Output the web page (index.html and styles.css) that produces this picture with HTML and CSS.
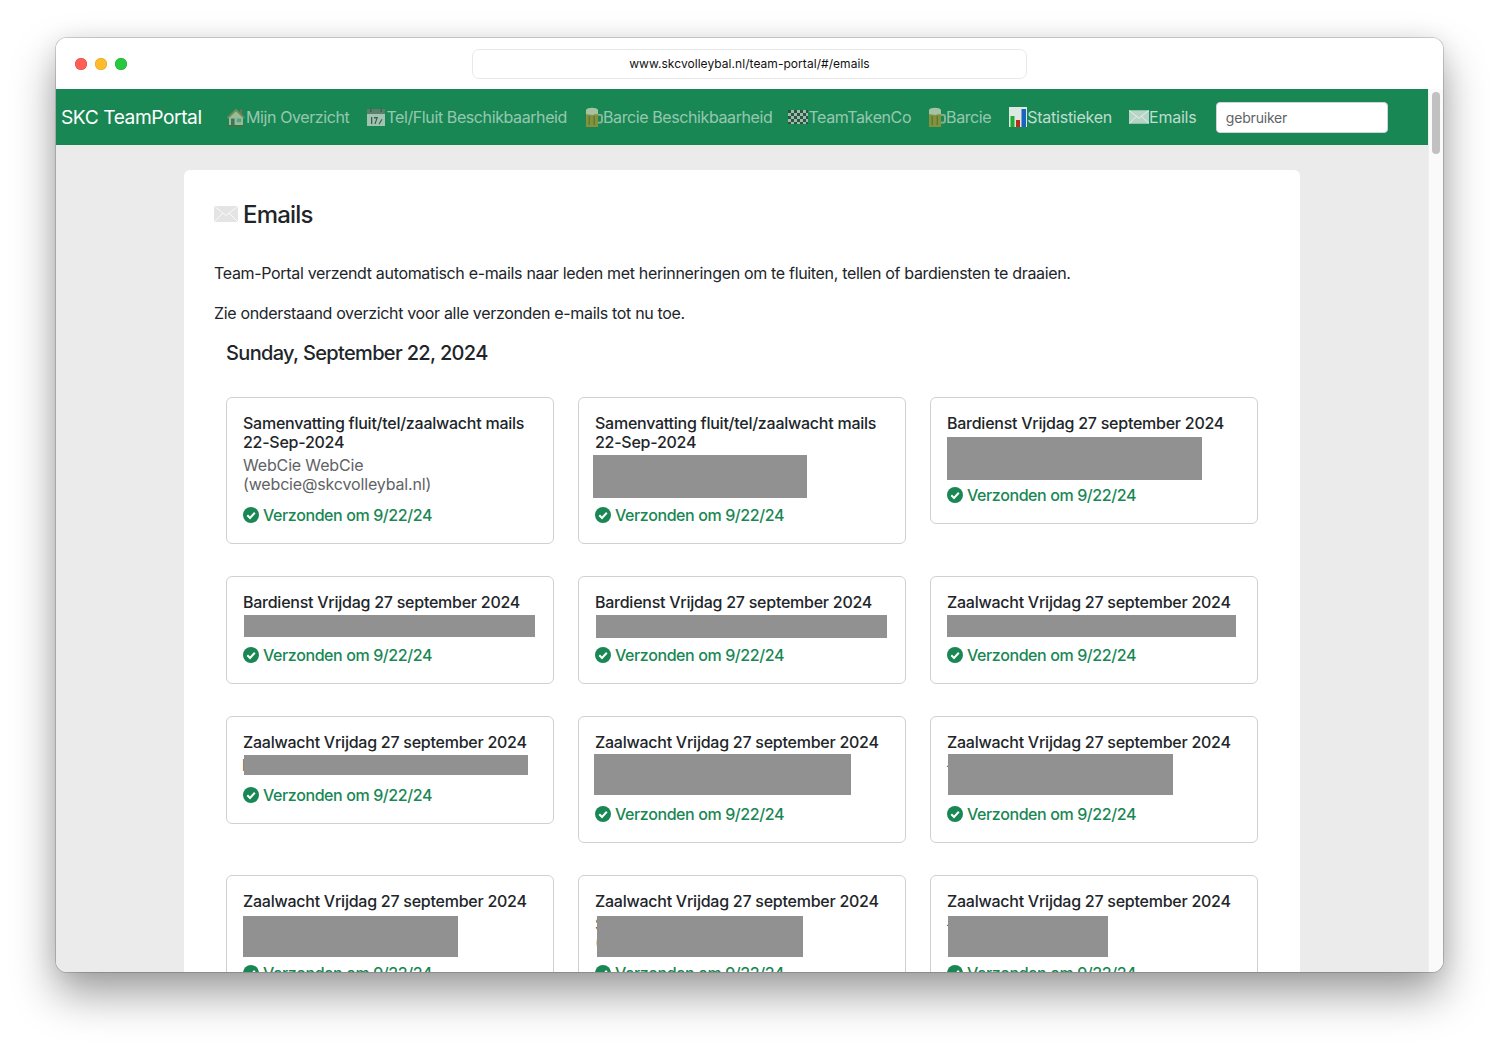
FILE: index.html
```html
<!DOCTYPE html>
<html lang="nl">
<head>
<meta charset="utf-8">
<title>SKC TeamPortal</title>
<link rel="stylesheet" href="styles.css">
</head>
<body>
<svg class="defs" width="0" height="0" aria-hidden="true">
  <defs>
    <symbol id="i-house" viewBox="0 0 20 20">
      <path d="M3 9.500 10 3.500l7 6V18H3z" fill="#c3cfa6"/>
      <path d="M.8 10.500 10 1.500l9.200 9-1.400 1.200L10 4.200 2.200 11.700z" fill="#8d8a66"/>
      <path d="M14 2.500h2.200v5.200L14 5.800z" fill="#8a6f55"/>
      <path d="M5 11.500h3.600V18H5z" fill="#4f6f66"/>
      <path d="M10.800 11.500h4.400v3.800h-4.400z" fill="#6fa6ae"/>
      <path d="M1 18h18v1.600H1z" fill="#4c6b3c"/>
    </symbol>
    <symbol id="i-cal" viewBox="0 0 20 20">
      <path d="M1 2h18v17H1z" fill="#cfd8d0"/>
      <path d="M1 2h18v5H1z" fill="#6d7f74"/>
      <path d="M4 1h1.500v4H4zM14.500 1H16v4h-1.500z" fill="#4d5a52"/>
      <path d="M5 10h1.300v7H5zM8 10h4l-2.400 7H8.300l2-5.600H8zM12.500 17l3-5 1 .6-3 5z" fill="#44524a"/>
    </symbol>
    <symbol id="i-beer" viewBox="0 0 18 20">
      <path d="M1 5h12v15H1z" fill="#a8963a"/>
      <path d="M1 3c1-3 11-3 12 0v4c-2 1-3-.5-4 .5-1 1-2 0-3 .2C4 8 3 7 1 7.500z" fill="#d4d8bd"/>
      <path d="M13 7h2.500c1.700 0 2.500 1.300 2.500 3v3.500c0 1.800-.8 3-2.500 3H13v-1.800h2c.8 0 1-.7 1-1.400v-3.100c0-.8-.2-1.400-1-1.400h-2z" fill="#b3bfa2"/>
      <path d="M3.500 9H5v9H3.500zM8.500 9H10v9H8.500z" fill="#77752d"/>
    </symbol>
    <symbol id="i-flag" viewBox="0 0 20 14">
      <path d="M0 0h20v14H0z" fill="#c3d1c8"/>
      <path d="M0 0h3v3H0zM6 0h3v3H6zM12 0h3v3h-3zM18 0h2v3h-2zM3 3h3v3H3zM9 3h3v3H9zM15 3h3v3h-3zM0 6h3v3H0zM6 6h3v3H6zM12 6h3v3h-3zM18 6h2v3h-2zM3 9h3v3H3zM9 9h3v3H9zM15 9h3v3h-3zM0 12h3v2H0zM6 12h3v2H6zM12 12h3v2h-3zM18 12h2v2h-2z" fill="#33433a"/>
    </symbol>
    <symbol id="i-chart" viewBox="0 0 18 20">
      <path d="M0 0h18v20H0z" fill="#e7eee9"/>
      <path d="M1.500 9h4v11h-4z" fill="#1fae33"/>
      <path d="M7 13h4v7H7z" fill="#c5281c"/>
      <path d="M12.500 2H17v18h-4.500z" fill="#1c62c4"/>
    </symbol>
    <symbol id="i-mail" viewBox="0 0 24 16">
      <path d="M0 0h24v16H0z" fill="currentColor"/>
      <path d="M0 0l12 9.500L24 0M0 16l9-9M24 16l-9-9" fill="none" stroke="#fff" stroke-opacity=".85" stroke-width=".9"/>
    </symbol>
    <symbol id="i-check" viewBox="0 0 16 16">
      <circle cx="8" cy="8" r="8" fill="currentColor"/>
      <path d="M4.300 8.300 7 11l4.800-5.200" fill="none" stroke="#fff" stroke-width="2"/>
    </symbol>
  </defs>
</svg>

<div class="window">
  <header class="titlebar">
    <div class="lights">
      <span class="light light-red"></span>
      <span class="light light-amber"></span>
      <span class="light light-green"></span>
    </div>
    <div class="address">www.skcvolleybal.nl/team-portal/#/emails</div>
  </header>

  <div class="viewport">
    <div class="page">
      <nav class="navbar">
        <a class="brand">SKC TeamPortal</a>
        <ul class="navlist">
          <li class="navitem item-1"><svg class="ico ico-house"><use href="#i-house"/></svg>Mijn Overzicht</li>
          <li class="navitem item-2"><svg class="ico ico-cal"><use href="#i-cal"/></svg>Tel/Fluit Beschikbaarheid</li>
          <li class="navitem item-3"><svg class="ico ico-beer"><use href="#i-beer"/></svg>Barcie Beschikbaarheid</li>
          <li class="navitem item-4"><svg class="ico ico-flag"><use href="#i-flag"/></svg>TeamTakenCo</li>
          <li class="navitem item-5"><svg class="ico ico-beer"><use href="#i-beer"/></svg>Barcie</li>
          <li class="navitem item-6 bright"><svg class="ico ico-chart"><use href="#i-chart"/></svg>Statistieken</li>
          <li class="navitem item-7 bright"><svg class="ico ico-mail nav-mail"><use href="#i-mail"/></svg>Emails</li>
        </ul>
        <input class="userbox" type="text" placeholder="gebruiker">
      </nav>

      <main class="sheet">
        <h1 class="title"><svg class="title-mail"><use href="#i-mail"/></svg>Emails</h1>
        <p class="intro intro-first">Team-Portal verzendt automatisch e-mails naar leden met herinneringen om te fluiten, tellen of bardiensten te draaien.</p>
        <p class="intro">Zie onderstaand overzicht voor alle verzonden e-mails tot nu toe.</p>
        <h2 class="date">Sunday, September 22, 2024</h2>

        <section class="grid">
          <article class="mail long">
            <h3 class="subject">Samenvatting fluit/tel/zaalwacht mails 22-Sep-2024</h3>
            <div class="who">WebCie WebCie<br>(webcie@skcvolleybal.nl)</div>
            <div class="sent"><svg class="check"><use href="#i-check"/></svg>Verzonden om 9/22/24</div>
          </article>
          <article class="mail long">
            <h3 class="subject">Samenvatting fluit/tel/zaalwacht mails 22-Sep-2024</h3>
            <div class="who two"><span class="bar b1"></span></div>
            <div class="sent"><svg class="check"><use href="#i-check"/></svg>Verzonden om 9/22/24</div>
          </article>
          <article class="mail">
            <h3 class="subject">Bardienst Vrijdag 27 september 2024</h3>
            <div class="who two"><span class="bar b2"></span></div>
            <div class="sent"><svg class="check"><use href="#i-check"/></svg>Verzonden om 9/22/24</div>
          </article>

          <article class="mail">
            <h3 class="subject">Bardienst Vrijdag 27 september 2024</h3>
            <div class="who one"><span class="bar b3"></span></div>
            <div class="sent"><svg class="check"><use href="#i-check"/></svg>Verzonden om 9/22/24</div>
          </article>
          <article class="mail">
            <h3 class="subject">Bardienst Vrijdag 27 september 2024</h3>
            <div class="who one"><span class="bar b4"></span></div>
            <div class="sent"><svg class="check"><use href="#i-check"/></svg>Verzonden om 9/22/24</div>
          </article>
          <article class="mail">
            <h3 class="subject">Zaalwacht Vrijdag 27 september 2024</h3>
            <div class="who one"><span class="bar b5"></span></div>
            <div class="sent"><svg class="check"><use href="#i-check"/></svg>Verzonden om 9/22/24</div>
          </article>

          <article class="mail">
            <h3 class="subject">Zaalwacht Vrijdag 27 september 2024</h3>
            <div class="who one"><span class="peek">l</span><span class="bar b6"></span></div>
            <div class="sent"><svg class="check"><use href="#i-check"/></svg>Verzonden om 9/22/24</div>
          </article>
          <article class="mail">
            <h3 class="subject">Zaalwacht Vrijdag 27 september 2024</h3>
            <div class="who two"><span class="bar b7"></span></div>
            <div class="sent"><svg class="check"><use href="#i-check"/></svg>Verzonden om 9/22/24</div>
          </article>
          <article class="mail">
            <h3 class="subject">Zaalwacht Vrijdag 27 september 2024</h3>
            <div class="who two"><span class="peek">-</span><span class="bar b8"></span></div>
            <div class="sent"><svg class="check"><use href="#i-check"/></svg>Verzonden om 9/22/24</div>
          </article>

          <article class="mail">
            <h3 class="subject">Zaalwacht Vrijdag 27 september 2024</h3>
            <div class="who two"><span class="bar b9"></span></div>
            <div class="sent"><svg class="check"><use href="#i-check"/></svg>Verzonden om 9/22/24</div>
          </article>
          <article class="mail">
            <h3 class="subject">Zaalwacht Vrijdag 27 september 2024</h3>
            <div class="who two">S<br>(<span class="bar b10"></span></div>
            <div class="sent"><svg class="check"><use href="#i-check"/></svg>Verzonden om 9/22/24</div>
          </article>
          <article class="mail">
            <h3 class="subject">Zaalwacht Vrijdag 27 september 2024</h3>
            <div class="who two"><span class="peek">-</span><span class="bar b11"></span></div>
            <div class="sent"><svg class="check"><use href="#i-check"/></svg>Verzonden om 9/22/24</div>
          </article>
        </section>
      </main>
    </div>
    <div class="scrollbar"><span class="thumb"></span></div>
  </div>
</div>
</body>
</html>
```

FILE: styles.css
```css
* { box-sizing: border-box; }

html, body { height: 100%; }

body {
  margin: 0;
  padding: 38px 56px 74px;
  overflow: hidden;
  background: #fff;
  font-family: Inter, "Liberation Sans", sans-serif;
  color: #212529;
}

.defs { position: absolute; }

.window {
  height: 934px;
  display: flex;
  flex-direction: column;
  border-radius: 11px;
  overflow: hidden;
  background: #fff;
  box-shadow: 0 0 0 1px rgba(0, 0, 0, .16), 0 22px 44px rgba(0, 0, 0, .38), 0 0 22px rgba(0, 0, 0, .08);
}

.titlebar {
  height: 51px;
  flex: none;
  display: flex;
  align-items: center;
  background: #fff;
  padding: 0 0 0 19px;
}

.lights { display: flex; gap: 8px; width: 397px; flex: none; }

.light { width: 12px; height: 12px; border-radius: 50%; }
.light-red { background: #fe5f57; box-shadow: inset 0 0 0 .5px #e0443e; }
.light-amber { background: #febb2e; box-shadow: inset 0 0 0 .5px #dea123; }
.light-green { background: #27c840; box-shadow: inset 0 0 0 .5px #1aab29; }

.address {
  width: 555px;
  height: 30px;
  margin-top: 1px;
  padding-bottom: 2px;
  border: 1px solid #e8e8e8;
  border-radius: 7px;
  display: flex;
  align-items: center;
  justify-content: center;
  font-size: 12px;
  letter-spacing: .05px;
  color: #111;
}

.viewport { flex: 1; min-height: 0; display: flex; }

.page {
  flex: 1;
  min-width: 0;
  background: #ebebeb;
  overflow: hidden;
}

.scrollbar {
  width: 15px;
  flex: none;
  background: #fafafa;
  border-left: 1px solid #efefef;
  padding: 3px 3px 0 3px;
}

.thumb {
  display: block;
  width: 8px;
  height: 62px;
  border-radius: 4px;
  background: #c1c1c1;
}

.navbar {
  height: 56px;
  display: flex;
  align-items: center;
  padding-left: 5px;
  background: #198754;
}

.brand {
  width: 165px;
  flex: none;
  font-size: 19.200px;
  letter-spacing: -.44px;
  color: #fff;
}

.navlist {
  display: flex;
  align-items: center;
  list-style: none;
  margin: 0;
  padding: 0;
}

.navitem {
  display: flex;
  align-items: center;
  font-size: 16px;
  letter-spacing: -.4px;
  white-space: nowrap;
  color: rgba(255, 255, 255, .55);
}

.bright { color: rgba(255, 255, 255, .72); letter-spacing: -.25px; }

.item-2 { margin-left: 17px; }
.item-3 { margin-left: 18px; }
.item-4 { margin-left: 16px; }
.item-5 { margin-left: 17px; }
.item-6 { margin-left: 18px; }
.item-7 { margin-left: 17px; }

.ico { flex: none; height: 20px; width: 20px; opacity: .75; }
.ico-house { width: 20px; }
.ico-cal { width: 20px; }
.ico-beer { width: 18px; }
.ico-flag { width: 20px; height: 14px; }
.ico-chart { width: 18px; opacity: .95; }
.ico-mail { width: 20px; height: 14px; }
.nav-mail { color: #b7d5c6; opacity: 1; }

.userbox {
  width: 172px;
  height: 31px;
  margin-left: 19.500px;
  padding: 0 9px;
  border: 1px solid #ced4da;
  border-radius: 4px;
  background: #fff;
  font-family: inherit;
  font-size: 14px;
  letter-spacing: -.2px;
}

.userbox::placeholder { color: #5f6368; opacity: 1; }

.sheet {
  width: 1116px;
  height: 900px;
  margin: 25px 0 0 128px;
  padding: 29px 30px 0;
  background: #fff;
  border-radius: 6px 6px 0 0;
}

.title {
  display: flex;
  align-items: center;
  margin: 0;
  height: 30px;
  font-size: 24px;
  font-weight: 500;
  letter-spacing: -.8px;
}

.title-mail {
  width: 24px;
  height: 16px;
  margin: -1px 5px 0 0;
  color: #e4e4e4;
}

.intro {
  margin: 0;
  font-size: 16px;
  line-height: 24px;
  letter-spacing: -.33px;
  margin-top: 16px;
}

.intro-first { margin-top: 32px; }

.date {
  margin: 16px 0 0 12px;
  height: 24px;
  font-size: 20px;
  line-height: 24px;
  font-weight: 500;
  letter-spacing: -.66px;
}

.grid {
  display: grid;
  grid-template-columns: repeat(3, 328px);
  column-gap: 24px;
  row-gap: 32px;
  align-items: start;
  margin: 32px 0 0 12px;
}

.mail {
  padding: 16px;
  border: 1px solid #d0d0d0;
  border-radius: 6px;
  background: #fff;
}

.subject {
  margin: 0 0 3.500px;
  font-size: 16px;
  line-height: 19.500px;
  font-weight: 500;
  letter-spacing: -.25px;
}

.long .subject { line-height: 19px; }

.who {
  position: relative;
  font-size: 16px;
  line-height: 18.750px;
  letter-spacing: -.16px;
  color: #5f6366;
}

.long .who { line-height: 19px; padding-bottom: .5px; }

.one { height: 18.500px; color: #555; }
.two { height: 37.500px; color: #555; }
.long .two { height: 38.500px; }

.peek { margin-left: -.9px; }

.bar {
  position: absolute;
  background: #919191;
}

.b1 { left: -2px; top: -.500px; width: 214px; height: 43px; }
.b2 { left: 0; top: 0; width: 255px; height: 43px; }
.b3 { left: 1px; top: -.500px; width: 291px; height: 22px; }
.b4 { left: 1px; top: -.500px; width: 291px; height: 23px; }
.b5 { left: 0; top: -.500px; width: 289px; height: 22px; }
.b6 { left: 1px; top: -.500px; width: 284px; height: 20px; }
.b7 { left: -1px; top: -1.500px; width: 257px; height: 41px; }
.b8 { left: 1px; top: -1.500px; width: 225px; height: 41px; }
.b9 { left: 0; top: 1.500px; width: 215px; height: 41px; }
.b10 { left: 2px; top: 1.500px; width: 206px; height: 41px; }
.b11 { left: 1px; top: 1.500px; width: 160px; height: 41px; }

.sent {
  display: flex;
  align-items: center;
  height: 24px;
  margin-top: 8.500px;
  font-size: 16px;
  font-weight: 500;
  letter-spacing: -.4px;
  color: #198754;
}

.check {
  width: 16px;
  height: 16px;
  margin-right: 4px;
  flex: none;
}
```
